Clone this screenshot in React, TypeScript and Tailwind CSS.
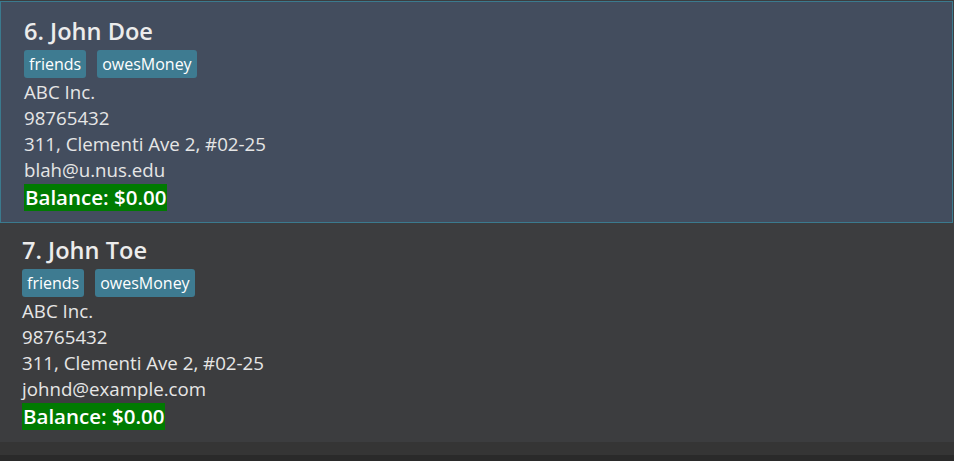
import React from "react";

const font = { fontFamily: '"Open Sans", "Noto Sans", sans-serif' };

function Card({ idx, name, email, selected }: { idx: number; name: string; email: string; selected?: boolean }) {
  return (
    <div
      className={
        selected
          ? "h-[222px] mt-[1px] mr-[1px] border border-[#3b7a8e] bg-[#434d5e] pl-[23px] pt-[13px]"
          : "h-[219px] bg-[#3c3d3f] pl-[22px] pt-[11px]"
      }
    >
      <div className="text-[23.6px] leading-[32px] font-semibold text-[#ececec]">
        {idx}. {name}
      </div>
      <div className="flex gap-[11px] mt-[3px] mb-[1px]">
        <span className="h-[28px] px-[5px] rounded-[3px] bg-[#3e7b91] text-[16px] leading-[28px] text-white">friends</span>
        <span className="h-[28px] px-[5px] rounded-[3px] bg-[#3e7b91] text-[16px] leading-[28px] text-white">owesMoney</span>
      </div>
      <div className="text-[#e6e6e6] text-[18.7px] leading-[26px]">
        <div>ABC Inc.</div>
        <div>98765432</div>
        <div>311, Clementi Ave 2, #02-25</div>
        <div>{email}</div>
      </div>
      <div className="mt-[1px] inline-block bg-[#007a01] text-white text-[20.5px] leading-[27px] font-semibold px-[1px]">
        Balance: $0.00
      </div>
    </div>
  );
}

export default function App() {
  return (
    <div className="w-[954px] h-[461px] bg-[#3c3d3f] flex flex-col overflow-hidden" style={font}>
      <div className="bg-[#3c3d3f]">
        <Card idx={6} name="John Doe" email="blah@u.nus.edu" selected />
      </div>
      <Card idx={7} name="John Toe" email="johnd@example.com" />
      <div className="h-[13px] bg-[#353535]" />
      <div className="flex-1 bg-[#2a2a2a]" />
    </div>
  );
}
